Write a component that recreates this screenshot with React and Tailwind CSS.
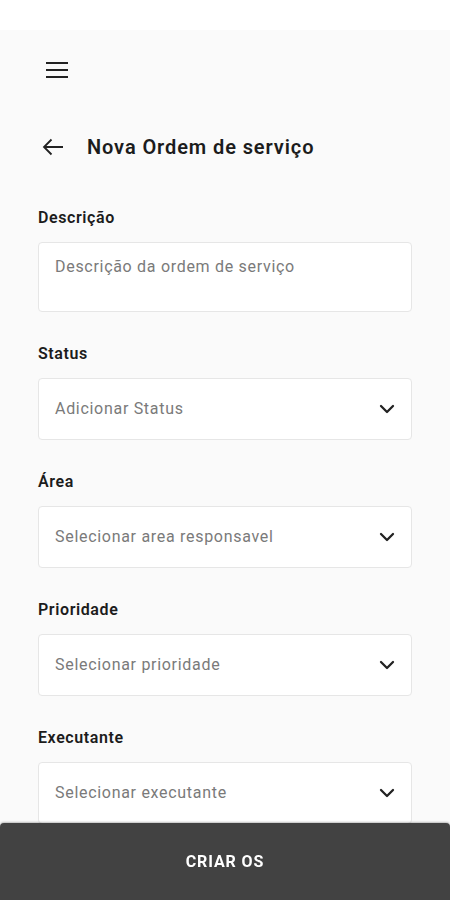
import React from "react";
import { ChevronDown } from "lucide-react";

const fields = [
  { label: "Status", placeholder: "Adicionar Status" },
  { label: "Área", placeholder: "Selecionar area responsavel" },
  { label: "Prioridade", placeholder: "Selecionar prioridade" },
  { label: "Executante", placeholder: "Selecionar executante" },
];

function Label({ children }) {
  return (
    <label className="block h-[20px] leading-[20px] text-[16px] font-semibold tracking-[0.6px] text-[#1c1c1c] mb-[14px]">
      {children}
    </label>
  );
}

export default function App() {
  return (
    <div className="h-screen overflow-hidden bg-white font-['Roboto',sans-serif]">
      <div className="h-[30px] bg-white" />
      <div className="bg-[#fafafa] h-[870px] px-[38px]">
        <div className="pt-[32px] pl-[8px] h-[80px]">
          <svg width="22" height="16" viewBox="0 0 22 16" className="text-[#222]">
            <path d="M0 1h22M0 8h22M0 15h22" stroke="currentColor" strokeWidth="2" />
          </svg>
        </div>

        <div className="flex items-center h-[36px] mt-[19px] mb-[43px]">
          <svg width="22" height="18" viewBox="0 0 22 18" className="ml-[4px] text-[#222]">
            <path d="M21 9H2M9.5 1.5L2 9l7.5 7.5" stroke="currentColor" strokeWidth="1.8" fill="none" />
          </svg>
          <h1 className="ml-[23px] text-[20px] font-semibold tracking-[0.9px] text-[#1c1c1c]">
            Nova Ordem de serviço
          </h1>
        </div>

        <Label>Descrição</Label>
        <div className="h-[70px] bg-white border border-[#e6e6e6] rounded-[4px] px-[16px] pt-[12px] text-[16px] tracking-[0.7px] text-[#7a7a7a] mb-[32px]">
          Descrição da ordem de serviço
        </div>

        {fields.map((f) => (
          <div key={f.label}>
            <Label>{f.label}</Label>
            <div className="h-[62px] bg-white border border-[#e6e6e6] rounded-[4px] pl-[16px] pr-[12px] flex items-center justify-between text-[16px] tracking-[0.7px] text-[#7a7a7a] mb-[32px]">
              <span>{f.placeholder}</span>
              <ChevronDown size={24} strokeWidth={2.3} className="text-[#222]" />
            </div>
          </div>
        ))}
      </div>

      <button className="fixed bottom-0 left-0 w-full h-[77px] bg-[#424242] rounded-t-[4px] shadow-[0_-1px_2px_rgba(0,0,0,0.25)] text-white text-[16px] font-bold tracking-[0.9px]">
        CRIAR OS
      </button>
    </div>
  );
}
